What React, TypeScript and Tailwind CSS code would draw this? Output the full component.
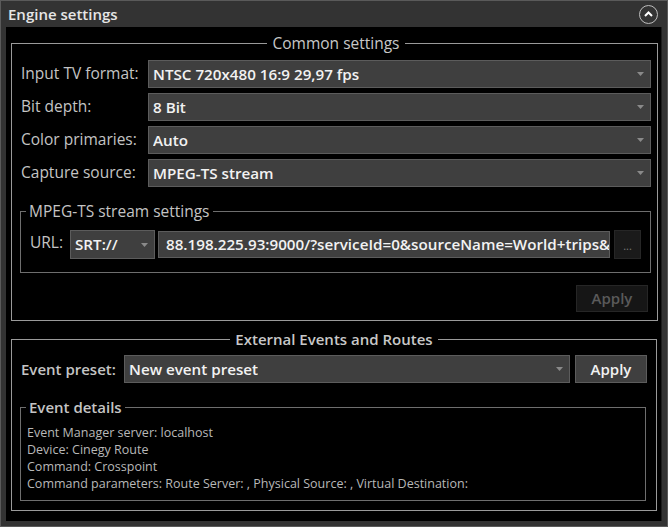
import React from 'react';

const font = "font-['Open_Sans','Noto_Sans',sans-serif]";

function Arrow() {
  return (
    <svg width="7" height="4" viewBox="0 0 7 4" className="shrink-0">
      <path d="M0 0 L7 0 L3.5 4 Z" fill="#8a8a8a" />
    </svg>
  );
}

function Combo({ value, className = '' }: { value: string; className?: string }) {
  return (
    <div
      className={`flex items-center justify-between h-full bg-[#3f3f3f] border border-[#5c5c5c] pl-[4px] pr-[6px] text-[15.2px] font-semibold text-[#f2f2f2] ${className}`}
    >
      <span className="truncate">{value}</span>
      <Arrow />
    </div>
  );
}

function Row({ label, value }: { label: string; value: string }) {
  return (
    <div className="flex items-center h-[28px]">
      <div className="w-[127px] shrink-0 text-[15.5px] text-[#c4c4c4]">{label}</div>
      <Combo value={value} className="flex-1" />
    </div>
  );
}

export default function App() {
  return (
    <div className={`w-[668px] h-[527px] bg-[#333333] border border-[#5a5a5a] flex flex-col ${font}`}>
      {/* Header */}
      <div className="h-[26px] shrink-0 flex items-center justify-between pl-[7px] pr-[9px]">
        <span className="text-[15px] font-semibold text-[#e6e6e6] leading-none">Engine settings</span>
        <div className="w-[19px] h-[19px] rounded-full border border-[#bdbdbd] flex items-center justify-center">
          <svg width="9" height="6" viewBox="0 0 9 6">
            <path d="M1 5 L4.5 1.5 L8 5" stroke="#ffffff" strokeWidth="2" fill="none" />
          </svg>
        </div>
      </div>

      {/* Body */}
      <div className="flex-1 bg-black mx-[5px] mb-[5px] border-r border-[#1c1c1c] px-[5px] pt-[6px] flex flex-col gap-[8px]">
        {/* Common settings */}
        <fieldset className="border border-[#9a9a9a] h-[288px] pl-[9px] pr-[6px] flex flex-col">
          <legend className="mx-auto px-[5px] text-[15.5px] leading-[20px] text-[#c8c8c8]">Common settings</legend>
          <div className="flex flex-col gap-[5px] mt-[7px]">
            <Row label="Input TV format:" value="NTSC 720x480 16:9 29,97 fps" />
            <Row label="Bit depth:" value="8 Bit" />
            <Row label="Color primaries:" value="Auto" />
            <Row label="Capture source:" value="MPEG-TS stream" />
          </div>

          <fieldset className="border border-[#6e6e6e] mt-[14px] h-[72px] pl-[9px] pr-[9px] -ml-[1px] mr-0">
            <legend className="-ml-[4px] px-[3px] text-[15.5px] leading-[20px] text-[#c4c4c4]">MPEG-TS stream settings</legend>
            <div className="flex items-center h-[29px] mt-[9px]">
              <span className="w-[40px] shrink-0 text-[15.5px] text-[#c4c4c4] -mt-[3px]">URL:</span>
              <Combo value="SRT://" className="w-[85px] shrink-0" />
              <div className="ml-[3px] h-[27px] w-[452px] shrink-0 bg-[#3f3f3f] border border-[#5c5c5c] px-[7px] text-[15.2px] font-semibold text-[#f2f2f2] leading-[25px] overflow-hidden whitespace-nowrap">
                88.198.225.93:9000/?serviceId=0&amp;sourceName=World+trips&amp;
              </div>
              <div className="ml-[4px] w-[27px] h-[29px] shrink-0 bg-[#1a1a1a] border border-[#262626] flex items-center justify-center text-[11px] text-[#7a7a7a] pt-[4px]">
                ...
              </div>
            </div>
          </fieldset>

          <div className="flex justify-end mt-[12px]">
            <div className="w-[72px] h-[27px] bg-[#161616] border border-[#262626] flex items-center justify-center text-[15px] font-semibold text-[#5a5a5a] mr-[3px]">
              Apply
            </div>
          </div>
        </fieldset>

        {/* External events */}
        <fieldset className="border border-[#9a9a9a] h-[182px] pl-[9px] pr-[9px] flex flex-col">
          <legend className="mx-auto px-[5px] text-[15px] leading-[20px] font-semibold text-[#c8c8c8]">External Events and Routes</legend>
          <div className="flex items-center h-[28px] mt-[6px]">
            <div className="w-[103px] shrink-0 text-[15px] font-semibold text-[#c4c4c4]">Event preset:</div>
            <Combo value="New event preset" className="w-[446px] shrink-0" />
            <div className="ml-[5px] w-[72px] h-[28px] shrink-0 bg-[#3f3f3f] border border-[#5c5c5c] flex items-center justify-center text-[15px] font-semibold text-[#f2f2f2]">
              Apply
            </div>
          </div>

          <fieldset className="border border-[#6e6e6e] mt-[14px] h-[104px] -ml-[1px] mr-[1px] pl-[6px]">
            <legend className="-ml-[1px] px-[3px] text-[15px] leading-[20px] font-semibold text-[#c4c4c4]">Event details</legend>
            <div className="flex flex-col text-[12.5px] leading-[17px] text-[#b8b8b8] mt-[7px]">
              <span>Event Manager server: localhost</span>
              <span>Device: Cinegy Route</span>
              <span>Command: Crosspoint</span>
              <span>Command parameters: Route Server: , Physical Source: , Virtual Destination:</span>
            </div>
          </fieldset>
        </fieldset>
      </div>
    </div>
  );
}
